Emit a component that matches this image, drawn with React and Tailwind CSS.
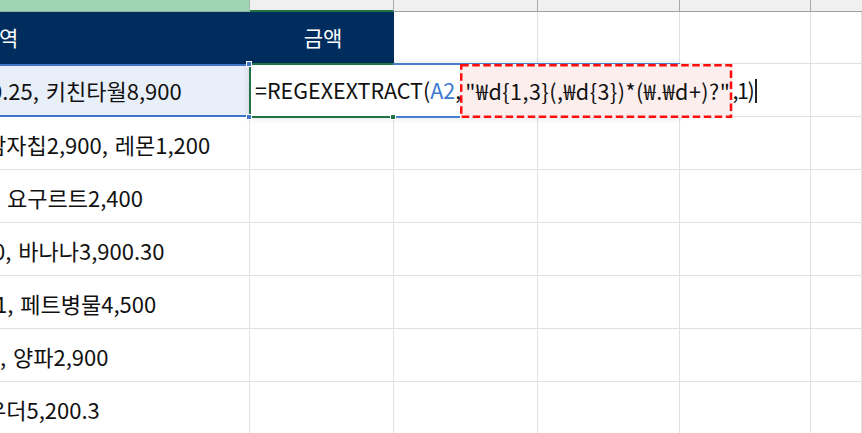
export default function App() {
  const rest = [
    'w-[144px]',
    'w-[144px]',
    'w-[142px]',
    'w-[131px]',
    'flex-1',
  ];
  const rows = [
    { t: '감자칩2,900, 레몬1,200', ml: 'ml-[-14px]' },
    { t: '요구르트2,400', ml: 'ml-[7px]' },
    { t: '0, 바나나3,900.30', ml: 'ml-[-7px]' },
    { t: '1, 페트병물4,500', ml: 'ml-[-5px]' },
    { t: ', 양파2,900', ml: 'ml-[0px]' },
    { t: '우더5,200.3', ml: 'ml-[-14px]' },
  ];
  return (
    <div className="relative w-[862px] h-[433px] overflow-hidden bg-white font-['Noto_Sans_CJK_KR','Noto_Sans',sans-serif] text-[22px] text-[#111]">
      {/* column headers */}
      <div className="flex h-[12px]">
        <div className="w-[250px] shrink-0 bg-[#a0d5b4] border-r border-r-[#9fb8a8] border-b border-b-[#8fb09a]" />
        <div className="w-[144px] shrink-0 bg-[#f0f0f0] border-r border-r-[#a8a8a8] border-b-2 border-b-[#217346]" />
        <div className="w-[144px] shrink-0 bg-[#f0f0f0] border-r border-r-[#a8a8a8] border-b border-b-[#a0a0a0]" />
        <div className="w-[142px] shrink-0 bg-[#f0f0f0] border-r border-r-[#a8a8a8] border-b border-b-[#a0a0a0]" />
        <div className="w-[131px] shrink-0 bg-[#f0f0f0] border-r border-r-[#a8a8a8] border-b border-b-[#a0a0a0]" />
        <div className="flex-1 bg-[#f0f0f0] border-b border-b-[#a0a0a0]" />
      </div>

      {/* row 1 : header */}
      <div className="flex h-[52px] text-[21px]">
        <div className="w-[250px] shrink-0 bg-[#002d5e] text-white flex items-center overflow-hidden whitespace-nowrap">
          <span className="ml-[-1px]">역</span>
        </div>
        <div className="w-[144px] shrink-0 bg-[#002d5e] text-white flex items-center justify-center pl-[2px]">
          금액
        </div>
        {rest.slice(1).map((w, i) => (
          <div key={i} className={`${w} shrink-0 border-r border-r-[#e1e1e1] border-b border-b-[#e1e1e1]`} />
        ))}
      </div>

      {/* row 2 */}
      <div className="flex h-[53px]">
        <div className="w-[250px] shrink-0 bg-[#e9eff9] border-t-2 border-b-2 border-[#3e74c9] flex items-center overflow-hidden whitespace-nowrap [word-spacing:2px]">
          <span className="ml-[-10px]">0.25, 키친타월8,900</span>
        </div>
        {rest.map((w, i) => (
          <div key={i} className={`${w} shrink-0 border-r border-r-[#e1e1e1] border-b border-b-[#e1e1e1]`} />
        ))}
      </div>

      {rows.map((r, idx) => (
        <div key={idx} className="flex h-[53px]">
          <div className="w-[250px] shrink-0 border-r border-r-[#e1e1e1] border-b border-b-[#e1e1e1] flex items-center overflow-hidden whitespace-nowrap pt-[2px] [word-spacing:2px]">
            <span className={r.ml}>{r.t}</span>
          </div>
          {rest.map((w, i) => (
            <div key={i} className={`${w} shrink-0 border-r border-r-[#e1e1e1] border-b border-b-[#e1e1e1]`} />
          ))}
        </div>
      ))}

      {/* in-cell formula editor (overlay) */}
      <div className="absolute left-[249px] top-[63px] w-[431px] h-[55px] bg-white shadow-[0_0_8px_rgba(0,0,0,0.12)]">
        <div className="absolute left-0 top-0 w-[2px] h-full bg-[#217346]" />
        <div className="absolute left-0 top-0 w-[145px] h-[2px] bg-[#217346]" />
        <div className="absolute left-0 bottom-0 w-[145px] h-[2px] bg-[#217346]" />
        <div className="absolute left-[144px] top-0 right-0 h-[2px] bg-[#4a7fd0]" />
        <div className="absolute left-[144px] bottom-0 right-0 h-[2px] bg-[#4a7fd0]" />
        <div className="absolute left-[6px] top-0 h-full flex items-center whitespace-nowrap text-[21.5px]">
          <span>=REGEXEXTRACT(</span>
          <span className="text-[#3a78d2]">A2</span>
          <span className="tracking-[-1px]">,</span>
          <span className="relative flex items-center h-[54px] mt-[1px] bg-[#fdeeee] pl-[5px] pr-[2px] tracking-[0.5px]">
            <svg className="absolute inset-0 w-full h-full overflow-visible">
              <rect
                x="1.25"
                y="1.25"
                className="w-[calc(100%-2.5px)] h-[calc(100%-2.5px)]"
                fill="none"
                stroke="#ff0d0d"
                strokeWidth="2.5"
                strokeDasharray="7.5 3.5"
              />
            </svg>
            <span className="relative">"₩d{'{'}1,3{'}'}(,₩d{'{'}3{'}'})*(₩.₩d+)?"</span>
          </span>
          <span className="tracking-[-1.5px]">,1)</span>
          <span className="ml-[2px] w-[1.5px] h-[24px] bg-[#222]" />
        </div>
      </div>

      {/* selection handles */}
      <div className="absolute left-[246px] top-[61px] w-[6px] h-[6px] bg-[#3e74c9] border border-white" />
      <div className="absolute left-[246px] top-[114px] w-[6px] h-[6px] bg-[#3e74c9] border border-white" />
      <div className="absolute left-[390px] top-[114px] w-[6px] h-[6px] bg-[#217346] border border-white" />
    </div>
  );
}
